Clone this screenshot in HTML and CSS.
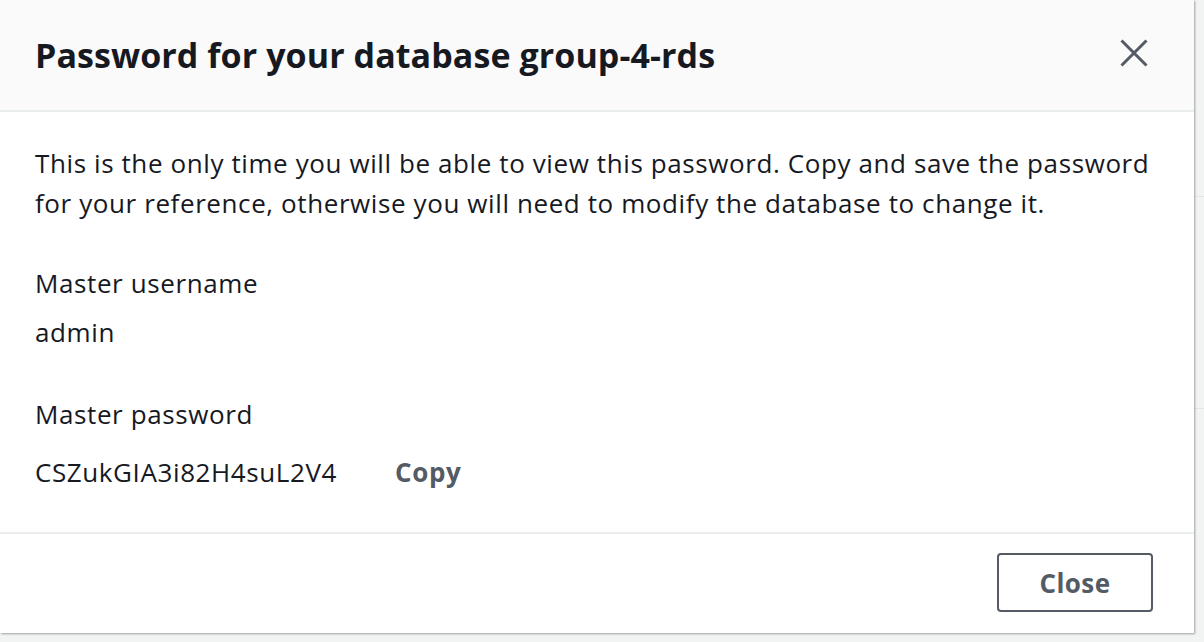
FILE: index.html
```html
<!DOCTYPE html>
<html>
<head>
<meta charset="utf-8">
<link rel="stylesheet" href="styles.css">
</head>
<body>
<div class="page">
  <div class="page-row r1"></div>
  <div class="page-row r2"></div>
  <div class="page-row r3"></div>
</div>
<div class="modal">
  <div class="modal-header">
    <h2 class="title">Password for your database group-4-rds</h2>
    <button class="dismiss" aria-label="Close">
      <svg width="28" height="28" viewBox="0 0 28 28"><path d="M1.5 1.5 L26.5 26.5 M26.5 1.5 L1.5 26.5" stroke="#545b64" stroke-width="3" fill="none"/></svg>
    </button>
  </div>
  <div class="modal-body">
    <p class="intro">This is the only time you will be able to view this password. Copy and save the password for your reference, otherwise you will need to modify the database to change it.</p>
    <div class="field first">
      <div class="label">Master username</div>
      <div class="value">admin</div>
    </div>
    <div class="field second">
      <div class="label">Master password</div>
      <div class="value pw-row"><span>CSZukGIA3i82H4suL2V4</span><span class="copy">Copy</span></div>
    </div>
  </div>
  <div class="modal-footer">
    <button class="close-btn">Close</button>
  </div>
</div>
</body>
</html>
```

FILE: styles.css
```css
html, body {
  margin: 0;
  padding: 0;
}
body {
  background: #f2f3f3;
  width: 1204px;
  height: 642px;
  overflow: hidden;
  position: relative;
  font-family: "Open Sans", "Noto Sans", sans-serif;
  color: #16191f;
}
.page {
  display: flex;
  flex-direction: column;
}
.page-row {
  border-bottom: 1px solid #e4e6e6;
}
.r1 { height: 196px; }
.r2 { height: 211px; }
.r3 { height: 200px; border-bottom: 0; }
.modal {
  position: absolute;
  top: 0;
  left: 0;
  width: 1194px;
  height: 633px;
  background: #ffffff;
  box-shadow: 1px 1px 2px rgba(0,0,0,0.35);
  display: flex;
  flex-direction: column;
}
.modal-header {
  height: 110px;
  flex: none;
  background: #fafafa;
  border-bottom: 2px solid #eaeded;
  display: flex;
  align-items: center;
  justify-content: space-between;
  padding: 0 46px 0 35px;
}
.title {
  margin: 0;
  font-size: 34px;
  line-height: 46px;
  font-weight: 700;
  letter-spacing: 0.08px;
  color: #16191f;
}
.dismiss {
  background: none;
  border: 0;
  padding: 0;
  width: 28px;
  height: 28px;
  display: flex;
  margin-top: -4px;
}
.modal-body {
  flex: 1;
  padding: 0 40px 0 35px;
  font-size: 26px;
  letter-spacing: 0.6px;
}
.intro {
  margin: 31px 0 0 0;
  line-height: 40px;
}
.field.first {
  margin-top: 40px;
}
.field.second {
  margin-top: 42px;
}
.label {
  line-height: 40px;
}
.value {
  line-height: 40px;
  margin-top: 9px;
}
.pw-row {
  display: flex;
  gap: 58px;
  margin-top: 18px;
}
.copy {
  font-weight: 700;
  color: #545b64;
}
.modal-footer {
  flex: none;
  border-top: 2px solid #eaeded;
  display: flex;
  align-items: flex-start;
  justify-content: flex-end;
  padding: 19px 41px 0 0;
  box-sizing: border-box;
  height: 101px;
}
.close-btn {
  width: 156px;
  height: 59px;
  border: 2px solid #545b64;
  border-radius: 4px;
  background: #fff;
  font-family: inherit;
  font-size: 26px;
  letter-spacing: 0.45px;
  font-weight: 700;
  color: #545b64;
  padding: 0;
}
```
